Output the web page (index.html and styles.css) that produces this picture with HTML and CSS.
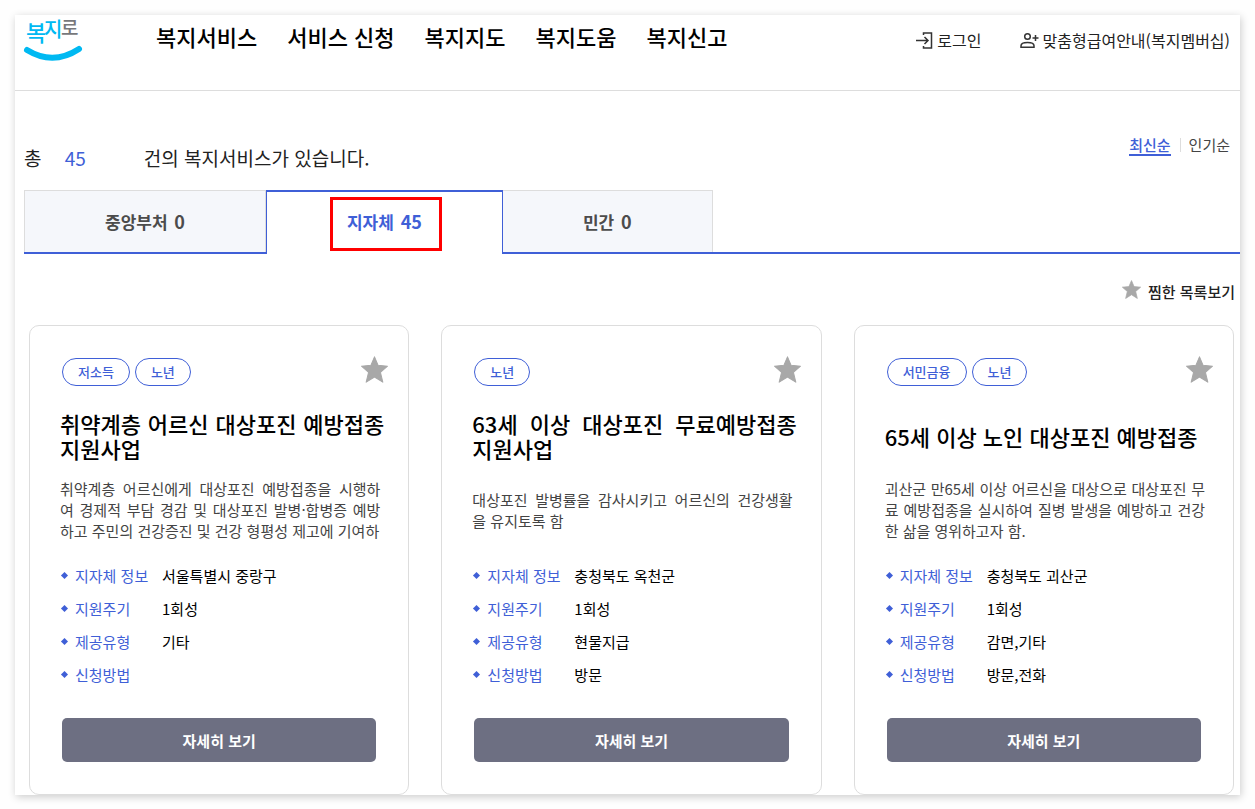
FILE: index.html
```html
<!DOCTYPE html>
<html lang="ko">
<head>
    <meta charset="UTF-8">
    <meta name="viewport" content="width=device-width, initial-scale=1.0">
    <title>복지로</title>
    <link rel="stylesheet" href="styles.css">
</head>
<body>
    <svg class="defs" width="0" height="0">
        <symbol id="star" viewBox="0 0 26 26">
            <path d="M13 0.8l3.5 8.2 9 .8-6.8 5.900 2.300 9.500L13 20.200 5 25.200l2.300-9.500L.5 9.800l9-.8z" fill="#a8a8a8" stroke="#a8a8a8" stroke-width="1" stroke-linejoin="round"/>
        </symbol>
    </svg>
    <div class="page">
        <header class="header">
            <a class="logo" href="#">
                <svg width="60" height="48" viewBox="0 0 60 48">
                    <text class="logo-blue" x="2" y="26" font-size="22">복</text>
                    <text class="logo-blue" x="20" y="22" font-size="20">지</text>
                    <text class="logo-gray" x="37" y="20" font-size="19">로</text>
                    <path d="M3 35Q29 51 55 34" fill="none" stroke="#00b9f2" stroke-width="6" stroke-linecap="round"/>
                </svg>
            </a>
            <nav class="nav">
                <a href="#">복지서비스</a>
                <a href="#">서비스 신청</a>
                <a href="#">복지지도</a>
                <a href="#">복지도움</a>
                <a href="#">복지신고</a>
            </nav>
            <div class="util">
                <a href="#">
                    <svg width="17" height="17" viewBox="0 0 17 17" fill="none" stroke="#333" stroke-width="1.500"><path d="M7.500 3V1h8v15h-8v-2M0 8.500h12M8.500 5l3.500 3.500L8.500 12"/></svg>
                    로그인
                </a>
                <a href="#">
                    <svg width="19" height="17" viewBox="0 0 19 17" fill="none" stroke="#333" stroke-width="1.500"><circle cx="7.500" cy="4.500" r="2.800"/><path d="M1 15.200v-1.500C1 11.500 4 10.500 7.500 10.500s6.500 1 6.500 3.200v1.500zM15.500 3v6M12.500 6h6"/></svg>
                    맞춤형급여안내(복지멤버십)
                </a>
            </div>
        </header>

        <main class="content">
            <div class="summary">
                <p class="total">총 <strong>45</strong>건의 복지서비스가 있습니다.</p>
                <div class="sort">
                    <a class="on" href="#">최신순</a>
                    <a href="#">인기순</a>
                </div>
            </div>

            <div class="tabs" role="tablist">
                <button class="tab" type="button" role="tab">중앙부처 <span class="num">0</span></button>
                <button class="tab active" type="button" role="tab" aria-selected="true"><span class="mark">지자체 <span class="num">45</span></span></button>
                <button class="tab" type="button" role="tab">민간 <span class="num">0</span></button>
            </div>

            <a class="favorite" href="#">
                <svg width="19" height="19"><use href="#star"/></svg>
                찜한 목록보기
            </a>

            <div class="cards">
                <article class="card">
                    <div class="card-top">
                        <span class="tag">저소득</span>
                        <span class="tag">노년</span>
                        <button class="star" type="button" aria-label="찜하기"><svg width="27" height="27"><use href="#star"/></svg></button>
                    </div>
                    <h2 class="title"><span>취약계층 어르신 대상포진 예방접종 지원사업</span></h2>
                    <div class="desc"><p>취약계층 어르신에게 대상포진 예방접종을 시행하여 경제적 부담 경감 및 대상포진 발병·합병증 예방하고 주민의 건강증진 및 건강 형평성 제고에 기여하</p></div>
                    <dl class="info">
                        <dt>지자체 정보</dt><dd>서울특별시 중랑구</dd>
                        <dt>지원주기</dt><dd>1회성</dd>
                        <dt>제공유형</dt><dd>기타</dd>
                        <dt>신청방법</dt><dd></dd>
                    </dl>
                    <button class="more" type="button">자세히 보기</button>
                </article>

                <article class="card">
                    <div class="card-top">
                        <span class="tag">노년</span>
                        <button class="star" type="button" aria-label="찜하기"><svg width="27" height="27"><use href="#star"/></svg></button>
                    </div>
                    <h2 class="title"><span>63세 이상 대상포진 무료예방접종 지원사업</span></h2>
                    <div class="desc"><p>대상포진 발병률을 감사시키고 어르신의 건강생활을 유지토록 함</p></div>
                    <dl class="info">
                        <dt>지자체 정보</dt><dd>충청북도 옥천군</dd>
                        <dt>지원주기</dt><dd>1회성</dd>
                        <dt>제공유형</dt><dd>현물지급</dd>
                        <dt>신청방법</dt><dd>방문</dd>
                    </dl>
                    <button class="more" type="button">자세히 보기</button>
                </article>

                <article class="card">
                    <div class="card-top">
                        <span class="tag">서민금융</span>
                        <span class="tag">노년</span>
                        <button class="star" type="button" aria-label="찜하기"><svg width="27" height="27"><use href="#star"/></svg></button>
                    </div>
                    <h2 class="title"><span>65세 이상 노인 대상포진 예방접종</span></h2>
                    <div class="desc"><p>괴산군 만65세 이상 어르신을 대상으로 대상포진 무료 예방접종을 실시하여 질병 발생을 예방하고 건강한 삶을 영위하고자 함.</p></div>
                    <dl class="info">
                        <dt>지자체 정보</dt><dd>충청북도 괴산군</dd>
                        <dt>지원주기</dt><dd>1회성</dd>
                        <dt>제공유형</dt><dd>감면,기타</dd>
                        <dt>신청방법</dt><dd>방문,전화</dd>
                    </dl>
                    <button class="more" type="button">자세히 보기</button>
                </article>
            </div>
        </main>
    </div>
</body>
</html>
```
FILE: styles.css
```css
*{
    margin: 0;
    padding: 0;
    box-sizing: border-box;
}
body{
    padding: 15px 15px 14px;
    background: #fefefe;
    color: #222;
    font-family: "Noto Sans CJK KR", sans-serif;
    font-size: 15px;
}
a{
    color: inherit;
    text-decoration: none;
}
button{
    border: 0;
    background: none;
    font-family: inherit;
    cursor: pointer;
}
svg{
    display: block;
}
.defs{
    position: absolute;
}
.page{
    background: #fff;
    box-shadow: 1px 2px 8px rgba(0, 0, 0, 0.2);
}

/* header */
.header{
    display: flex;
    align-items: flex-start;
    height: 76px;
    padding: 0 10px 0 9px;
    border-bottom: 1px solid #ddd;
}
.logo{
    width: 132px;
}
.logo svg{
    overflow: visible;
}
.logo-blue{
    fill: #00b9f2;
    font-weight: 500;
}
.logo-gray{
    fill: #77787b;
    font-weight: 500;
}
.nav{
    display: flex;
    gap: 30px;
    padding-top: 5px;
    color: #000;
    font-size: 22px;
    font-weight: 500;
    line-height: 32px;
}
.util{
    display: flex;
    gap: 38px;
    margin-left: auto;
    padding-top: 13px;
    font-size: 16px;
    line-height: 24px;
}
.util a{
    display: flex;
    align-items: center;
    gap: 4px;
}

/* result count, sort */
.content{
    padding: 42px 0 0 9px;
}
.summary{
    display: flex;
    justify-content: space-between;
    height: 57px;
    padding-right: 10px;
}
.total{
    padding-top: 11px;
    font-size: 19px;
    line-height: 28px;
}
.total strong{
    display: inline-block;
    width: 79px;
    margin-left: 18px;
    color: #3f5fd7;
    font-weight: 400;
}
.sort{
    display: flex;
    align-items: flex-start;
    padding-top: 2px;
    color: #444;
    line-height: 19px;
}
.sort a + a{
    margin-left: 9px;
    padding-left: 9px;
    background: linear-gradient(#ddd, #ddd) no-repeat 0 50% / 1px 14px;
}
.sort .on{
    border-bottom: 2px solid #3f5fd7;
    color: #3f5fd7;
    font-weight: 500;
}

/* tabs */
.tabs{
    display: flex;
    height: 64px;
    border-bottom: 2px solid #3f5fd7;
}
.tab{
    padding: 0 80px 2px;
    border: 1px solid #ddd;
    border-bottom: 0;
    background: #f5f7fb;
    color: #4c4c4c;
    font-size: 17px;
    font-weight: 700;
}
.tab.active{
    position: relative;
    z-index: 1;
    margin: 0 -1px -2px 0;
    padding-bottom: 4px;
    border-color: #3f5fd7;
    border-top-width: 2px;
    background: #fff;
    color: #3f5fd7;
}
.num{
    margin-left: 2px;
    font-size: 18px;
}
.mark{
    position: relative;
}
.mark::after{
    content: "";
    position: absolute;
    inset: -12px -20px -17px -17px;
    border: 3px solid #f00;
}

.favorite{
    display: flex;
    align-items: flex-start;
    justify-content: flex-end;
    gap: 7px;
    margin: 26px 5px 21px 0;
    font-weight: 500;
    line-height: 24px;
}

/* cards */
.cards{
    display: grid;
    grid-template-columns: repeat(3, 1fr);
    gap: 32px;
    padding: 0 6px 0 5px;
}
.card{
    padding: 32px 28px 32px 30px;
    border: 1px solid #ddd;
    border-radius: 10px;
}
.card-top{
    display: flex;
    gap: 5px;
    height: 28px;
    margin: 0 -8px 18px 2px;
}
.tag{
    padding: 0 15px;
    border: 1px solid #3f5fd7;
    border-radius: 14px;
    color: #3f5fd7;
    font-size: 13px;
    font-weight: 500;
    line-height: 26px;
}
.star{
    align-self: flex-end;
    margin: 0 0 3px auto;
}
.title{
    display: flex;
    align-items: center;
    height: 64px;
    margin-right: -4px;
    color: #000;
    font-size: 22px;
    font-weight: 500;
    line-height: 25px;
    text-align: justify;
    word-break: keep-all;
}
.desc{
    display: flex;
    align-items: center;
    height: 63px;
    margin-top: 10px;
    color: #444;
    line-height: 21px;
}
.desc p{
    text-align: justify;
}
.info{
    display: grid;
    grid-template-columns: 102px 1fr;
    grid-auto-rows: 33px;
    margin: 18px 0 27px;
    line-height: 33px;
}
.info dt{
    display: flex;
    align-items: center;
    gap: 8px;
    color: #3f5fd7;
}
.info dt::before{
    content: "";
    width: 5px;
    height: 5px;
    margin-left: 2px;
    background: #3f5fd7;
    transform: rotate(45deg);
}
.info dd{
    color: #000;
}
.more{
    display: block;
    width: calc(100% - 6px);
    height: 44px;
    margin: 0 2px;
    border-radius: 5px;
    background: #6d6f82;
    color: #fff;
    font-size: 15px;
    font-weight: 700;
}
```
